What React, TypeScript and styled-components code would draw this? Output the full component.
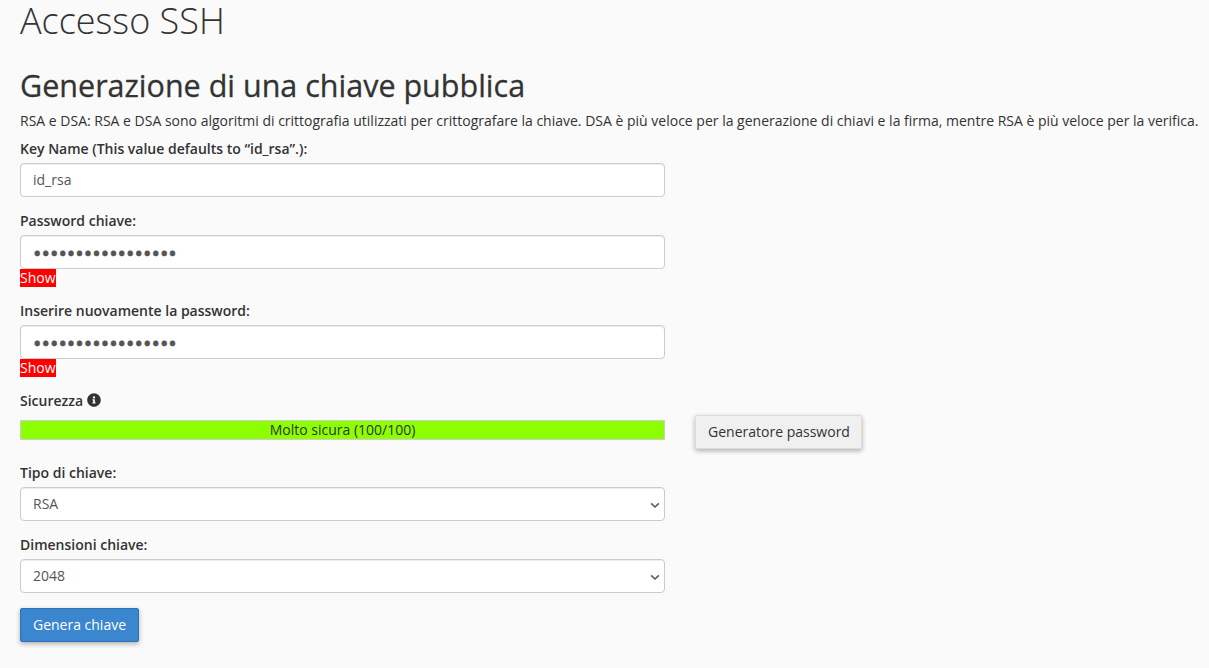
import React from 'react';
import styled, { createGlobalStyle } from 'styled-components';
import { FaInfoCircle } from 'react-icons/fa';

const GlobalStyle = createGlobalStyle`
  html, body {
    margin: 0;
    padding: 0;
    height: 100%;
    overflow: hidden;
    background: #fafafa;
  }
  body {
    font-family: "Open Sans", "Liberation Sans", sans-serif;
    font-size: 14px;
    line-height: 20px;
    color: #333;
  }
`;

const Chevron = () => (
  <ChevronIcon width="10" height="7" viewBox="0 0 10 7">
    <path d="M1.2 1.4 L5 5 L8.8 1.4" fill="none" stroke="#555" strokeWidth="1.5" />
  </ChevronIcon>
);

const App = () => {
  return (
    <Page>
      <GlobalStyle />
      <Title>Accesso SSH</Title>
      <Heading>Generazione di una chiave pubblica</Heading>
      <Intro>
        RSA e DSA: RSA e DSA sono algoritmi di crittografia utilizzati per crittografare la chiave. DSA è più veloce
        per la generazione di chiavi e la firma, mentre RSA è più veloce per la verifica.
      </Intro>
      <Form onSubmit={(e) => e.preventDefault()}>
        <Field>
          <Label htmlFor="key-name">Key Name (This value defaults to “id_rsa”.):</Label>
          <Input id="key-name" type="text" defaultValue="id_rsa" />
        </Field>
        <Field $gap={14}>
          <Label htmlFor="pass">Password chiave:</Label>
          <PasswordInput id="pass" type="password" defaultValue="aaaaaaaaaaaaaaaaa" />
          <ShowToggle>Show</ShowToggle>
        </Field>
        <Field $gap={14}>
          <Label htmlFor="pass2">Inserire nuovamente la password:</Label>
          <PasswordInput id="pass2" type="password" defaultValue="aaaaaaaaaaaaaaaaa" />
          <ShowToggle>Show</ShowToggle>
        </Field>
        <Field $gap={14}>
          <Label>
            Sicurezza <FaInfoCircle size={14} />
          </Label>
          <StrengthRow>
            <StrengthBar>Molto sicura (100/100)</StrengthBar>
            <GhostButton type="button">Generatore password</GhostButton>
          </StrengthRow>
        </Field>
        <Field $gap={23}>
          <Label htmlFor="type">Tipo di chiave:</Label>
          <SelectWrap>
            <Select id="type" defaultValue="RSA">
              <option>RSA</option>
              <option>DSA</option>
            </Select>
            <Chevron />
          </SelectWrap>
        </Field>
        <Field $gap={14}>
          <Label htmlFor="size">Dimensioni chiave:</Label>
          <SelectWrap>
            <Select id="size" defaultValue="2048">
              <option>1024</option>
              <option>2048</option>
              <option>4096</option>
            </Select>
            <Chevron />
          </SelectWrap>
        </Field>
        <PrimaryButton type="submit">Genera chiave</PrimaryButton>
      </Form>
    </Page>
  );
};

export default App;

const Page = styled.div`
  padding: 0 0 0 20px;
`;

const Title = styled.h1`
  margin: 0;
  font-size: 36px;
  line-height: 42px;
  font-weight: 300;
`;

const Heading = styled.h2`
  margin: 23px 0 0;
  font-size: 30.5px;
  line-height: 40px;
  font-weight: 400;
  -webkit-text-stroke: 0.3px #333;
  white-space: nowrap;
`;

const Intro = styled.p`
  margin: 6px 0 0;
  white-space: nowrap;
`;

const Form = styled.form`
  display: flex;
  flex-direction: column;
  margin-top: 8px;
  width: 645px;
`;

const Field = styled.div<{ $gap?: number }>`
  display: flex;
  flex-direction: column;
  margin-top: ${(p) => p.$gap ?? 0}px;
`;

const Label = styled.label`
  display: block;
  margin-bottom: 4px;
  font-weight: 600;
  & > svg {
    vertical-align: -1px;
  }
`;

const Input = styled.input`
  box-sizing: border-box;
  width: 100%;
  height: 34px;
  padding: 5px 12px 7px;
  font-family: inherit;
  font-size: 14px;
  color: #555;
  background: #fff;
  border: 1px solid #ccc;
  border-radius: 4px;
  box-shadow: inset 0 1px 1px rgba(0, 0, 0, 0.075);
`;

const PasswordInput = styled(Input)`
  padding: 0 12px;
  font-size: 22.5px;
  -webkit-text-stroke: 0.7px #555;
`;

const SelectWrap = styled.div`
  position: relative;
  height: 34px;
`;

const Select = styled.select`
  box-sizing: border-box;
  width: 100%;
  height: 34px;
  padding: 5px 12px 7px;
  appearance: none;
  font-family: inherit;
  font-size: 14px;
  color: #555;
  background: #fff;
  border: 1px solid #ccc;
  border-radius: 4px;
  box-shadow: inset 0 1px 1px rgba(0, 0, 0, 0.075);
`;

const ChevronIcon = styled.svg`
  position: absolute;
  right: 5px;
  top: 15px;
  pointer-events: none;
`;

const ShowToggle = styled.span`
  align-self: flex-start;
  height: 18px;
  width: 36px;
  font-size: 14px;
  line-height: 18px;
  color: #fff;
  background: #f00;
`;

const StrengthRow = styled.div`
  position: relative;
  margin-top: 5px;
`;

const StrengthBar = styled.div`
  box-sizing: border-box;
  height: 20px;
  border: 1px solid #ccc;
  background: #8cff00;
  text-align: center;
  line-height: 18px;
`;

const GhostButton = styled.button`
  position: absolute;
  left: 675px;
  top: -5px;
  box-sizing: border-box;
  width: 167px;
  height: 34px;
  padding: 0 0 2px 1px;
  font-family: inherit;
  font-size: 14px;
  color: #333;
  background: #f0f0f0;
  border: 1px solid #ddd;
  border-radius: 2px;
  box-shadow: 0 2px 5px rgba(0, 0, 0, 0.3);
  white-space: nowrap;
`;

const PrimaryButton = styled.button`
  align-self: flex-start;
  box-sizing: border-box;
  width: 119px;
  height: 34px;
  margin-top: 15px;
  padding: 0 0 2px;
  font-family: inherit;
  font-size: 14px;
  color: #fff;
  background: #3a87d0;
  border: 1px solid #2e74b5;
  border-radius: 2px;
  box-shadow: 0 2px 5px rgba(0, 0, 0, 0.3);
`;
